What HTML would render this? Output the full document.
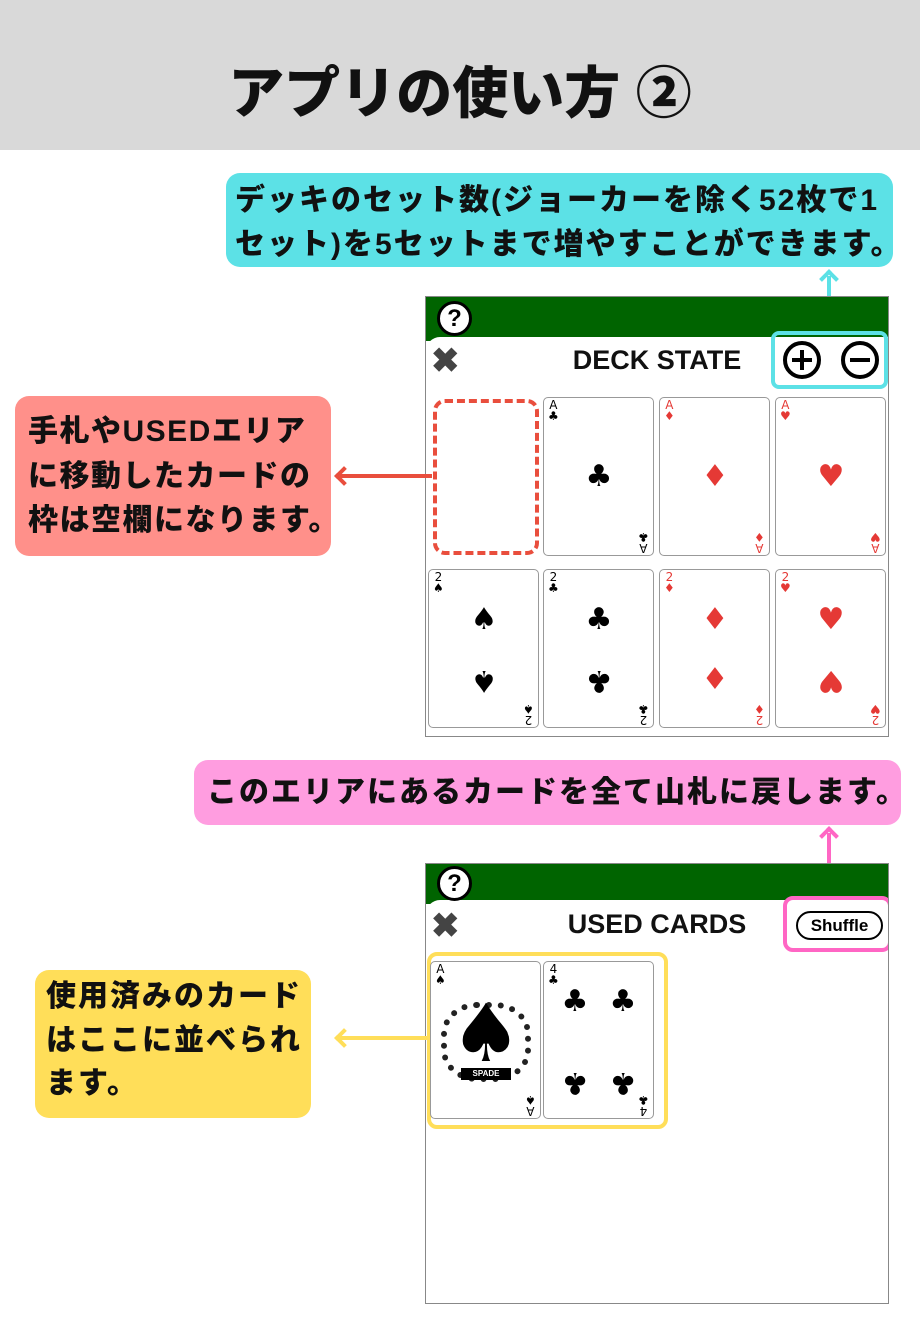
<!DOCTYPE html>
<html><head><meta charset="utf-8"><style>
*{margin:0;padding:0;box-sizing:border-box}
body{width:920px;height:1320px;background:#fff;position:relative;overflow:hidden;font-family:"Liberation Sans","Noto Sans CJK JP",sans-serif}
.abs{position:absolute}
.hdr{left:0;top:0;width:920px;height:150px;background:#d9d9d9;text-align:center;font-size:56px;font-weight:900;line-height:188px;color:#111}
.call{position:absolute;border-radius:14px;font-weight:900;font-size:30px;color:#111;white-space:nowrap;letter-spacing:2px}
.panel{position:absolute;left:425px;width:464px;border:1px solid #888;background:#fff;overflow:hidden}
.green{position:absolute;left:0;top:0;width:100%;height:44px;background:#006400}
.sheet{position:absolute;left:0;top:40px;width:100%;bottom:0;background:#fff;border-top-left-radius:14px}
.q{position:absolute;left:11px;top:4px;width:35px;height:35px;border:3px solid #000;border-radius:50%;background:#fff;font-weight:900;font-size:24px;text-align:center;line-height:29px}
.x{position:absolute;left:5px;font-size:34px;font-weight:900;color:#444}
.ttl{position:absolute;left:0;width:100%;text-align:center;font-size:27px;font-weight:700;color:#111}
.card{position:absolute;width:111px;height:159px;border:1.5px solid #999;border-radius:5px;background:#fff;font-family:"DejaVu Sans",sans-serif}
.card .c{position:absolute;left:4px;top:2px;font-size:12px;line-height:11px;text-align:center}
.card .cb{position:absolute;right:4px;bottom:2px;font-size:12px;line-height:11px;text-align:center;transform:rotate(180deg)}
.s{position:absolute;font-size:30px;line-height:30px;transform:translate(-50%,-50%)}
.r{color:#e53935}
</style></head><body>
<div class="abs hdr">アプリの使い方 ②</div>

<div class="call" style="left:226px;top:173px;width:667px;height:94px;background:#5ce1e6;padding:6px 0 0 9px;line-height:44px">デッキのセット数(ジョーカーを除く52枚で1<br>セット)を5セットまで増やすことができます。</div>
<div class="abs" style="left:827px;top:276px;width:4px;height:52px;background:#5ce1e6"></div>
<div class="abs" style="left:822px;top:272px;width:14px;height:14px;border-left:4px solid #5ce1e6;border-top:4px solid #5ce1e6;transform:rotate(45deg)"></div>

<div class="panel" style="top:296px;height:441px">
 <div class="green"></div>
 <div class="sheet"></div>
 <div class="q">?</div>
 <div class="x" style="top:44px">✖</div>
 <div class="ttl" style="top:48px">DECK STATE</div>
 <div class="abs" style="left:345px;top:34px;width:117px;height:58px;border:4px solid #5ce1e6;border-radius:8px"></div>
 <div class="abs" style="left:357px;top:44px;width:38px;height:38px;border:4px solid #000;border-radius:50%"></div>
 <div class="abs" style="left:366px;top:61px;width:20px;height:4px;background:#000"></div>
 <div class="abs" style="left:374px;top:53px;width:4px;height:20px;background:#000"></div>
 <div class="abs" style="left:415px;top:44px;width:38px;height:38px;border:4px solid #000;border-radius:50%"></div>
 <div class="abs" style="left:424px;top:61px;width:20px;height:4px;background:#000"></div>
 <div class="abs" style="left:7px;top:102px;width:106px;height:156px;border:4px dashed #e94e3d;border-radius:12px"></div>
 <div class="card" style="left:117px;top:100px"><div class="c">A<br>♣</div><div class="s" style="left:55px;top:79px">♣</div><div class="cb">A<br>♣</div></div>
 <div class="card r" style="left:233px;top:100px"><div class="c">A<br>♦</div><div class="s" style="left:55px;top:79px">♦</div><div class="cb">A<br>♦</div></div>
 <div class="card r" style="left:349px;top:100px"><div class="c">A<br>♥</div><div class="s" style="left:55px;top:79px">♥</div><div class="cb">A<br>♥</div></div>
 <div class="card" style="left:2px;top:272px"><div class="c">2<br>♠</div><div class="s" style="left:55px;top:50px">♠</div><div class="s" style="left:55px;top:110px;transform:translate(-50%,-50%) rotate(180deg)">♠</div><div class="cb">2<br>♠</div></div>
 <div class="card" style="left:117px;top:272px"><div class="c">2<br>♣</div><div class="s" style="left:55px;top:50px">♣</div><div class="s" style="left:55px;top:110px;transform:translate(-50%,-50%) rotate(180deg)">♣</div><div class="cb">2<br>♣</div></div>
 <div class="card r" style="left:233px;top:272px"><div class="c">2<br>♦</div><div class="s" style="left:55px;top:50px">♦</div><div class="s" style="left:55px;top:110px">♦</div><div class="cb">2<br>♦</div></div>
 <div class="card r" style="left:349px;top:272px"><div class="c">2<br>♥</div><div class="s" style="left:55px;top:50px">♥</div><div class="s" style="left:55px;top:110px;transform:translate(-50%,-50%) rotate(180deg)">♥</div><div class="cb">2<br>♥</div></div>
</div>

<div class="call" style="left:15px;top:396px;width:316px;height:160px;background:#ff908a;padding:14px 0 0 13px;line-height:44.5px;letter-spacing:1.5px">手札やUSEDエリア<br>に移動したカードの<br>枠は空欄になります。</div>
<div class="abs" style="left:340px;top:474px;width:92px;height:4px;background:#e94e3d"></div>
<div class="abs" style="left:337px;top:469px;width:14px;height:14px;border-left:4px solid #e94e3d;border-bottom:4px solid #e94e3d;transform:rotate(45deg)"></div>

<div class="call" style="left:194px;top:760px;width:707px;height:65px;background:#ff9de0;padding:0 0 0 13px;line-height:65px">このエリアにあるカードを全て山札に戻します。</div>
<div class="abs" style="left:827px;top:833px;width:4px;height:62px;background:#ff66c4"></div>
<div class="abs" style="left:822px;top:829px;width:14px;height:14px;border-left:4px solid #ff66c4;border-top:4px solid #ff66c4;transform:rotate(45deg)"></div>

<div class="panel" style="top:863px;height:441px">
 <div class="green" style="height:40px"></div>
 <div class="sheet" style="top:36px"></div>
 <div class="q" style="top:2px">?</div>
 <div class="x" style="top:42px">✖</div>
 <div class="ttl" style="top:45px">USED CARDS</div>
 <div class="abs" style="left:357px;top:32px;width:109px;height:56px;border:4px solid #ff66c4;border-radius:10px"></div>
 <div class="abs" style="left:370px;top:47px;width:87px;height:29px;border:2px solid #000;border-radius:15px;font-weight:700;font-size:17px;text-align:center;line-height:25px">Shuffle</div>
 <div class="abs" style="left:1px;top:88px;width:241px;height:177px;border:4px solid #ffde59;border-radius:10px"></div>
 <div class="card" style="left:4px;top:97px;height:158px"><div class="c">A<br>♠</div>
   <div class="abs" style="left:10px;top:40px;width:90px;height:80px;border-radius:40%;border:6px dotted #222"></div>
   <div class="s" style="left:55px;top:72px;font-size:80px;line-height:80px">♠</div>
   <div class="abs" style="left:30px;top:106px;width:50px;height:12px;background:#000;color:#fff;font-size:8px;font-weight:700;text-align:center;line-height:12px;font-family:'Liberation Sans',sans-serif">SPADE</div>
   <div class="cb">A<br>♠</div></div>
 <div class="card" style="left:117px;top:97px;height:158px"><div class="c">4<br>♣</div>
  <div class="s" style="left:31px;top:40px">♣</div><div class="s" style="left:79px;top:40px">♣</div>
  <div class="s" style="left:31px;top:120px;transform:translate(-50%,-50%) rotate(180deg)">♣</div><div class="s" style="left:79px;top:120px;transform:translate(-50%,-50%) rotate(180deg)">♣</div>
  <div class="cb">4<br>♣</div></div>
</div>

<div class="call" style="left:35px;top:970px;width:276px;height:148px;background:#ffde59;padding:5px 0 0 11px;line-height:43.5px">使用済みのカード<br>はここに並べられ<br>ます。</div>
<div class="abs" style="left:340px;top:1036px;width:90px;height:4px;background:#ffde59"></div>
<div class="abs" style="left:337px;top:1031px;width:14px;height:14px;border-left:4px solid #ffde59;border-bottom:4px solid #ffde59;transform:rotate(45deg)"></div>
</body></html>
